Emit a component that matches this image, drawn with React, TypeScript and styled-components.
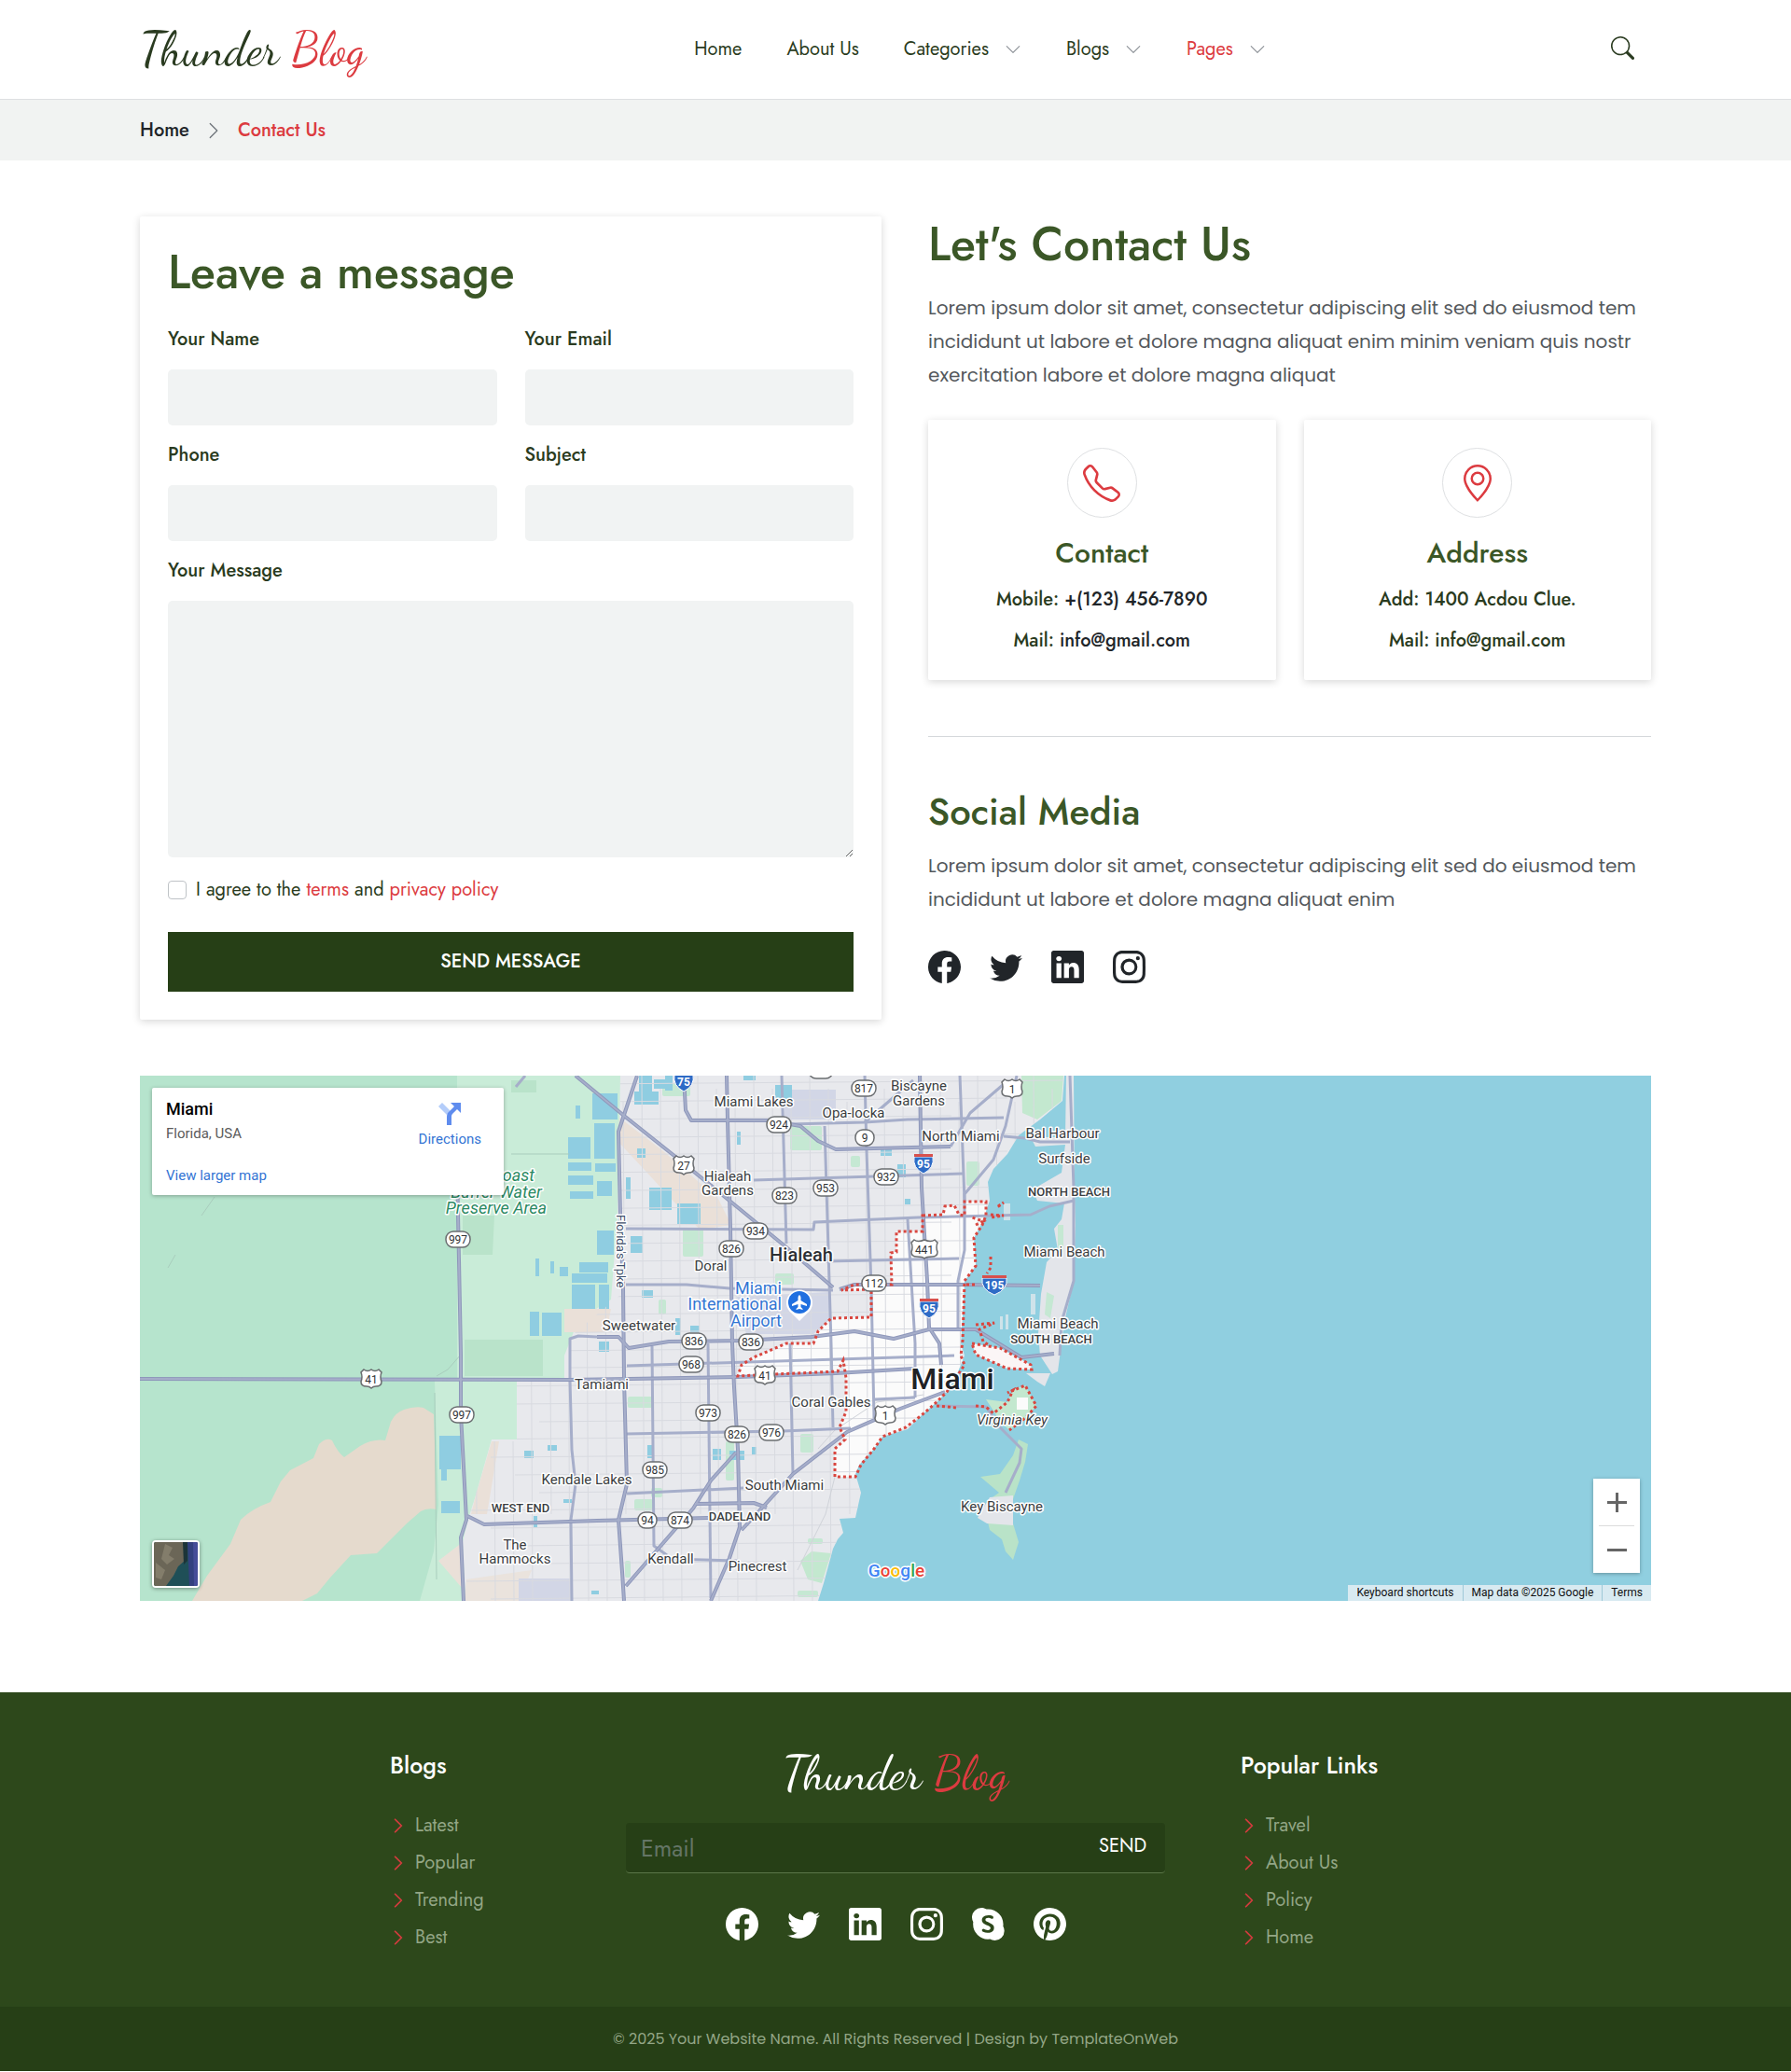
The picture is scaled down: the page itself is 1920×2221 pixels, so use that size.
import React from "react";
import styled, { createGlobalStyle } from "styled-components";
import {
  BsChevronDown,
  BsChevronRight,
  BsFacebook,
  BsGeoAlt,
  BsInstagram,
  BsLinkedin,
  BsPinterest,
  BsSearch,
  BsSkype,
  BsTelephone,
  BsTwitter,
} from "react-icons/bs";

const color = {
  leaf: "#3b5727",
  dark: "#2a3b20",
  ink: "#212529",
  red: "#dc3b40",
  field: "#f1f3f3",
  rule: "#dee0e2",
  body: "#54585c",
  footer: "#2d481b",
  footerDeep: "#263f16",
  footerText: "#93a686",
};

const heading = `Jost, Lato, "Open Sans", sans-serif`;
const bodyFont = `Poppins, Inter, "Open Sans", sans-serif`;
const script = `"Dancing Script", "Liberation Serif", serif`;

const GlobalStyle = createGlobalStyle`
  *, *::before, *::after { box-sizing: border-box; }
  body { margin: 0; background: #fff; color: ${color.dark}; font: 400 20px/30px ${heading}; }
  a { color: inherit; text-decoration: none; }
  h1, h2, h3, p, ul { margin: 0; padding: 0; }
  ul { list-style: none; }
  svg { display: block; }
  button { cursor: pointer; }
`;

const Container = styled.div`
  max-width: 1680px;
  margin: 0 auto;
  padding: 0 30px;
`;

/* ---------- header ---------- */

const Header = styled.header`
  border-bottom: 1px solid ${color.rule};
`;

const Bar = styled(Container)`
  display: flex;
  align-items: center;
  min-height: 106px;
`;

const Logo = styled.a<{ $light?: boolean }>`
  font: 400 50px/56px ${script};
  color: ${(p) => (p.$light ? "#fff" : color.dark)};
  white-space: nowrap;
  span {
    color: ${color.red};
  }
`;

const Nav = styled.nav`
  display: flex;
  gap: 48px;
  margin: 0 auto;
`;

const NavLink = styled.a<{ $active?: boolean }>`
  display: flex;
  align-items: center;
  gap: 17px;
  color: ${(p) => (p.$active ? color.red : color.dark)};
  svg {
    color: #8d9298;
  }
`;

const SearchButton = styled.button`
  padding: 0 18px 3px;
  border: 0;
  background: none;
  color: ${color.dark};
`;

const Crumbs = styled.nav`
  background: #f1f3f2;
`;

const CrumbList = styled(Container)`
  display: flex;
  align-items: center;
  gap: 16px;
  min-height: 65px;
  font-weight: 500;
  color: ${color.ink};
  svg {
    color: #6c7278;
  }
`;

const Current = styled.span`
  color: ${color.red};
`;

/* ---------- contact section ---------- */

const Columns = styled.section`
  display: grid;
  grid-template-columns: 795fr 775fr;
  gap: 50px;
  padding: 60px 0;
`;

const Card = styled.div`
  background: #fff;
  border-radius: 2px;
  box-shadow: 0 2px 8px rgba(0, 0, 0, 0.16);
`;

const FormCard = styled(Card).attrs({ as: "form" })`
  padding: 30px;
`;

const Title = styled.h1`
  font: 500 50px/60px ${heading};
  color: ${color.leaf};
`;

const SubTitle = styled.h2`
  font: 500 40px/40px ${heading};
  color: ${color.leaf};
`;

const Fields = styled.div`
  display: grid;
  grid-template-columns: 1fr 1fr;
  gap: 17px 30px;
  margin-top: 27px;
`;

const Field = styled.div<{ $wide?: boolean }>`
  display: flex;
  flex-direction: column;
  gap: 17px;
  grid-column: ${(p) => (p.$wide ? "1 / -1" : "auto")};
`;

const Label = styled.label`
  font-weight: 500;
`;

const Input = styled.input`
  width: 100%;
  height: 60px;
  padding: 0 15px;
  border: 0;
  border-radius: 5px;
  background: ${color.field};
  font: 400 20px/30px ${heading};
`;

const TextArea = styled.textarea`
  display: block;
  width: 100%;
  height: 275px;
  padding: 15px;
  border: 0;
  border-radius: 5px;
  background: ${color.field};
  font: 400 20px/30px ${heading};
  resize: vertical;
`;

const Agree = styled.div`
  display: flex;
  align-items: center;
  gap: 10px;
  margin: 20px 0 30px;
  a {
    color: ${color.red};
  }
`;

const Check = styled.input`
  appearance: none;
  width: 20px;
  height: 20px;
  margin: 0;
  border: 1px solid #bfc3c7;
  border-radius: 4px;
  background: #fff;
`;

const Submit = styled.button`
  width: 100%;
  height: 64px;
  border: 0;
  background: ${color.footerDeep};
  color: #fff;
  font: 500 20px/30px ${heading};
`;

const Copy = styled.p`
  margin-top: 20px;
  font: 400 20px/36px ${bodyFont};
  color: ${color.body};
`;

const InfoGrid = styled.div`
  display: grid;
  grid-template-columns: 1fr 1fr;
  gap: 30px;
  margin-top: 30px;
`;

const InfoCard = styled(Card)`
  display: flex;
  flex-direction: column;
  align-items: center;
  gap: 20px;
  padding: 30px;
  font-weight: 500;
  line-height: 24px;
  text-align: center;
`;

const Round = styled.span`
  display: grid;
  place-items: center;
  width: 75px;
  height: 75px;
  border: 1px solid ${color.rule};
  border-radius: 50%;
  color: ${color.red};
`;

const InfoTitle = styled.h3`
  font: 500 30px/36px ${heading};
  color: ${color.leaf};
`;

const InkLink = styled.a`
  color: ${color.ink};
`;

const Divider = styled.hr`
  height: 1px;
  margin: 60px 0;
  border: 0;
  background: #d5d8db;
`;

const Social = styled.div<{ $light?: boolean }>`
  display: flex;
  justify-content: ${(p) => (p.$light ? "center" : "flex-start")};
  gap: 31px;
  margin-top: 37px;
  color: ${(p) => (p.$light ? "#fff" : color.ink)};
`;

/* ---------- map ---------- */

const MapFrame = styled.section`
  position: relative;
  height: 563px;
  margin-bottom: 98px;
  overflow: hidden;
  font-family: Roboto, sans-serif;
  background: #90cfe0;
  > svg {
    width: 100%;
    height: 100%;
  }
`;

const PlaceCard = styled.div`
  position: absolute;
  top: 13px;
  left: 13px;
  display: flex;
  justify-content: space-between;
  width: 377px;
  height: 115px;
  padding: 10px 24px 8px 15px;
  border-radius: 2px;
  background: #fff;
  box-shadow: 0 1px 4px rgba(0, 0, 0, 0.3);
  font-size: 15px;
  line-height: 26px;
  color: #5b5b5b;
`;

const PlaceText = styled.div`
  display: flex;
  flex-direction: column;
`;

const PlaceName = styled.strong`
  font-size: 18px;
  font-weight: 500;
  color: #000;
`;

const BlueLink = styled.a`
  color: #3474d4;
`;

const LargerMap = styled(BlueLink)`
  margin-top: auto;
`;

const Directions = styled(BlueLink)`
  display: flex;
  flex-direction: column;
  align-items: center;
  gap: 2px;
  padding-top: 6px;
`;

const LayerButton = styled.button`
  position: absolute;
  left: 13px;
  bottom: 14px;
  width: 51px;
  height: 51px;
  padding: 0;
  border: 2px solid #fff;
  border-radius: 4px;
  overflow: hidden;
  box-shadow: 0 1px 4px rgba(0, 0, 0, 0.4);
`;

const ZoomBox = styled.div`
  position: absolute;
  right: 12px;
  bottom: 30px;
  width: 50px;
  padding: 0 6px;
  background: #fff;
  box-shadow: 0 1px 4px rgba(0, 0, 0, 0.3);
`;

const ZoomButton = styled.button`
  display: grid;
  place-items: center;
  width: 100%;
  height: 50px;
  padding: 0;
  border: 0;
  background: none;
  & + & {
    height: 51px;
    border-top: 1px solid #dcdcdc;
  }
`;

const Credits = styled.div`
  position: absolute;
  right: 0;
  bottom: 0;
  display: flex;
  height: 17px;
  background: #d8eaf1;
  font-size: 12px;
  line-height: 17px;
  color: #111;
  a {
    padding: 0 9px;
  }
  a + a {
    border-left: 1px solid #9fc9d8;
  }
`;

type Pts = string;

const thickRoads: Pts[] = [
  "0,325 461,326 524,325 641,323 746,319 830,314",
  "340,100 342,198 344,299 344,363 350,476 344,495 347,563",
  "533,0 513,60 515,149 518,228 519,325 522,438 513,476 517,532 519,563",
  "467,0 519,43 578,90 632,134 693,184 743,227",
  "629,0 630,47 633,164 635,287 637,334 641,400 643,484 632,517 612,563",
  "583,0 585,37 591,48 674,48 708,54 727,70 746,79 869,76",
  "836,0 838,120 844,220 846,270 857,287 859,310",
  "863,339 815,357 758,382 700,427 670,460 645,487",
  "490,280 513,280 524,292 567,285 643,284 720,280 766,274 808,282 846,272 896,272 945,302 980,298",
  "750,229 766,224 880,224 965,225",
  "639,404 612,434 593,464 521,547",
  "595,459 658,458 672,463",
  "351,472 369,481 490,477 609,474",
];

const thinRoads: Pts[] = [
  "697,52 777,50 823,47 926,45",
  "940,0 928,54 915,90 884,127 884,187 877,220 877,270",
  "658,112 882,105",
  "521,164 722,165 723,157 834,152 955,149 975,140 1001,134",
  "521,224 586,224 632,228 743,230",
  "735,199 878,196",
  "688,0 693,180",
  "734,54 741,287 743,377",
  "697,287 700,427",
  "777,0 779,80 784,227 787,367",
  "879,0 884,134",
  "823,154 831,287 831,345",
  "549,290 551,504 565,514",
  "609,287 612,560",
  "522,311 873,300",
  "521,384 689,381 762,378",
  "522,448 647,442",
  "788,347 831,345",
  "461,326 461,282 470,279 490,280",
  "461,326 463,401 467,438 462,476 463,563",
  "854,354 907,355 922,377 945,400 943,415 928,447",
  "997,0 1001,120 1001,220 988,264 986,300",
  "926,65 949,67 965,71 997,71",
  "777,50 829,5",
  "869,76 890,40 925,10",
  "565,518 640,520",
  "413,0 403,12",
];

const ponds: number[][] = [
  [485, 19, 27, 28], [487, 51, 22, 38], [459, 66, 24, 23], [459, 93, 25, 9], [488, 94, 22, 9],
  [459, 107, 27, 10], [490, 113, 16, 16], [461, 124, 25, 8], [535, 0, 14, 22], [521, 109, 5, 23],
  [490, 166, 18, 26], [471, 200, 31, 11], [463, 212, 38, 10], [463, 224, 25, 26], [492, 224, 11, 26],
  [418, 253, 10, 26], [431, 254, 21, 25], [424, 196, 4, 19], [440, 199, 4, 13], [450, 205, 9, 10],
  [321, 386, 23, 36], [323, 422, 6, 12], [323, 456, 20, 13], [467, 32, 5, 14], [492, 285, 11, 11],
  [530, 17, 26, 14], [546, 120, 24, 24], [576, 137, 25, 22], [526, 172, 13, 18], [647, 0, 13, 5],
  [681, 10, 18, 16], [794, 79, 12, 7], [812, 95, 9, 14], [632, 402, 16, 10], [614, 400, 9, 12],
  [533, 78, 9, 10], [563, 0, 8, 16], [640, 60, 4, 14], [574, 260, 6, 18], [590, 268, 10, 7],
  [538, 230, 12, 8], [437, 396, 10, 6], [412, 402, 10, 8], [454, 454, 9, 4], [422, 472, 4, 12],
  [544, 396, 6, 14], [484, 552, 8, 4], [656, 398, 5, 8], [820, 132, 6, 6], [551, 4, 12, 10],
];

const parks: number[][] = [
  [697, 54, 34, 26], [582, 164, 22, 30], [681, 212, 20, 12], [523, 344, 27, 12], [708, 384, 14, 20],
  [628, 392, 9, 42], [530, 454, 20, 12], [765, 320, 6, 15], [762, 86, 10, 12], [556, 240, 8, 16],
  [818, 286, 7, 8], [450, 430, 24, 9], [548, 442, 12, 10], [716, 496, 16, 6], [705, 552, 22, 7],
  [700, 296, 8, 8], [811, 202, 10, 12], [886, 92, 14, 26], [560, 8, 30, 14], [520, 520, 6, 18],
];

const land =
  "0,0 991,0 989,27 965,47 942,64 930,84 915,100 909,114 911,134 903,157 894,174 896,204 884,220 882,254 880,287 884,300 877,317 865,339 854,350 838,364 823,379 796,387 787,400 771,417 767,427 773,447 767,474 750,475 754,490 748,497 743,507 733,544 727,563 0,563";

const cityLimit =
  "839,150 861,149 863,140 873,139 878,149 884,150 884,135 907,135 907,150 903,160 894,174 896,204 884,220 882,284 880,300 884,310 865,339 854,350 838,364 821,377 796,387 787,400 773,417 767,430 745,430 745,400 756,390 750,377 757,360 757,324 754,305 748,317 681,320 641,322 645,310 658,302 693,287 722,287 727,274 731,270 741,260 784,259 784,229 752,230 766,224 806,224 805,190 811,189 811,167 839,167";

interface Place {
  x: number;
  y: number;
  text: string;
  size?: number;
  weight?: number;
  fill?: string;
  italic?: boolean;
  anchor?: "middle" | "end";
}

const places: Place[] = [
  { x: 658, y: 33, text: "Miami Lakes" },
  { x: 835, y: 16, text: "Biscayne" },
  { x: 835, y: 32, text: "Gardens" },
  { x: 765, y: 45, text: "Opa-locka" },
  { x: 880, y: 70, text: "North Miami" },
  { x: 989, y: 67, text: "Bal Harbour" },
  { x: 991, y: 94, text: "Surfside" },
  { x: 996, y: 129, text: "NORTH BEACH", size: 13, weight: 500 },
  { x: 630, y: 113, text: "Hialeah" },
  { x: 630, y: 128, text: "Gardens" },
  { x: 709, y: 199, text: "Hialeah", size: 20, weight: 500, fill: "#2d3034" },
  { x: 612, y: 209, text: "Doral" },
  { x: 991, y: 194, text: "Miami Beach" },
  { x: 984, y: 271, text: "Miami Beach" },
  { x: 977, y: 287, text: "SOUTH BEACH", size: 13, weight: 500 },
  { x: 535, y: 273, text: "Sweetwater" },
  { x: 688, y: 234, text: "Miami", size: 18, fill: "#3376d3", anchor: "end" },
  { x: 688, y: 251, text: "International", size: 18, fill: "#3376d3", anchor: "end" },
  { x: 688, y: 269, text: "Airport", size: 18, fill: "#3376d3", anchor: "end" },
  { x: 871, y: 336, text: "Miami", size: 32, weight: 500, fill: "#202124" },
  { x: 741, y: 355, text: "Coral Gables" },
  { x: 935, y: 374, text: "Virginia Key", italic: true },
  { x: 495, y: 336, text: "Tamiami" },
  { x: 479, y: 438, text: "Kendale Lakes" },
  { x: 408, y: 468, text: "WEST END", size: 13, weight: 500 },
  { x: 402, y: 508, text: "The" },
  { x: 402, y: 523, text: "Hammocks" },
  { x: 691, y: 444, text: "South Miami" },
  { x: 643, y: 477, text: "DADELAND", size: 13, weight: 500 },
  { x: 569, y: 523, text: "Kendall" },
  { x: 662, y: 531, text: "Pinecrest" },
  { x: 924, y: 467, text: "Key Biscayne" },
  { x: 423, y: 113, text: "East Coast", size: 18, italic: true, fill: "#2b8a63", anchor: "end" },
  { x: 382, y: 131, text: "Buffer Water", size: 18, italic: true, fill: "#2b8a63" },
  { x: 382, y: 148, text: "Preserve Area", size: 18, italic: true, fill: "#2b8a63" },
];

const stateRoutes: [number, number, string][] = [
  [776, 13, "817"], [685, 52, "924"], [777, 66, "9"], [800, 108, "932"], [735, 120, "953"],
  [691, 128, "823"], [660, 166, "934"], [634, 185, "826"], [787, 222, "112"], [594, 284, "836"],
  [655, 285, "836"], [591, 309, "968"], [609, 361, "973"], [640, 384, "826"], [677, 382, "976"],
  [552, 422, "985"], [544, 476, "94"], [579, 476, "874"], [341, 175, "997"], [345, 363, "997"],
];

const usRoutes: [number, number, string][] = [
  [248, 325, "41"], [583, 96, "27"], [935, 14, "1"], [841, 186, "441"], [670, 321, "41"], [799, 364, "1"],
];

const interstates: [number, number, string][] = [
  [583, 6, "75"], [840, 94, "95"], [846, 249, "95"], [916, 224, "195"],
];

function StateShield({ x, y, text }: { x: number; y: number; text: string }) {
  const w = text.length > 2 ? 26 : 20;
  return (
    <g>
      <rect x={x - w / 2} y={y - 8} width={w} height={17} rx={8} fill="#fff" stroke="#6a6d70" strokeWidth={1.5} />
      <text x={x} y={y + 5} fontSize={12} textAnchor="middle" fill="#303336">
        {text}
      </text>
    </g>
  );
}

function UsShield({ x, y, text }: { x: number; y: number; text: string }) {
  const s = text.length > 2 ? 3 : 0;
  return (
    <g>
      <path
        transform={`translate(${x} ${y})`}
        d={`M${-8 - s} -10 Q${-4 - s} -7 0 -10 Q${4 + s} -7 ${8 + s} -10 L${11 + s} -7 Q${9 + s} -2 ${11 + s} 3 Q${11 + s} 8 ${5 + s} 8 Q2 8 0 10 Q-2 8 ${-5 - s} 8 Q${-11 - s} 8 ${-11 - s} 3 Q${-9 - s} -2 ${-11 - s} -7 Z`}
        fill="#fff"
        stroke="#6a6d70"
        strokeWidth={1.5}
      />
      <text x={x} y={y + 5} fontSize={12} textAnchor="middle" fill="#303336">
        {text}
      </text>
    </g>
  );
}

function InterstateShield({ x, y, text }: { x: number; y: number; text: string }) {
  const h = text.length > 2 ? 13 : 10;
  return (
    <g>
      <path
        transform={`translate(${x} ${y})`}
        d={`M${-h} -7 H${h} Q${h + 2} 5 0 11 Q${-h - 2} 5 ${-h} -7 Z`}
        fill="#2e6bc6"
        stroke="#fff"
        strokeWidth={1}
      />
      <path transform={`translate(${x} ${y})`} d={`M${-h} -10 H${h} V-7 H${-h} Z`} fill="#d8504d" />
      <text x={x} y={y + 5} fontSize={12} fontWeight={700} textAnchor="middle" fill="#fff">
        {text}
      </text>
    </g>
  );
}

const range = (from: number, to: number, step: number) =>
  Array.from({ length: Math.ceil((to - from) / step) }, (_, i) => from + i * step);

function MiamiMap() {
  return (
    <svg viewBox="0 0 1620 563" preserveAspectRatio="xMidYMid slice" role="img" aria-label="Map of Miami">
      <defs>
        <clipPath id="land">
          <polygon points={land} />
        </clipPath>
        <clipPath id="urban">
          <path d="M515 0 H1010 V563 H350 V480 L377 392 H404 V327 L461 326 V280 L515 235 Z" />
        </clipPath>
      </defs>
      <rect width="1620" height="563" fill="#90cfe0" />
      <polygon points={land} fill="#e8e9ed" />
      <g clipPath="url(#land)">
        <path d="M0 0 H340 L345 563 H0 Z" fill="#b6e4cd" />
        <path
          d="M340 0 H515 L512 150 L505 240 L470 262 L455 300 V327 H404 V390 H377 L360 450 L352 475 L346 500 L349 563 H300 L315 510 L320 460 L316 327 H340 Z"
          fill="#c9ecd8"
        />
        <path d="M348 283 H432 V322 H348 Z M346 150 L380 150 L378 192 H346 Z" fill="#b9e3ca" />
        <path d="M398 5 H425 V18 H398 Z" fill="#b9e3ca" />
        <path
          d="M56 563 L72 536 L97 502 L108 476 Q120 464 140 457 L151 435 L161 423 L186 410 L192 395 Q200 387 206 391 Q212 404 219 409 L236 397 Q250 389 263 391 L269 371 Q274 361 283 358 Q295 354 304 356 L315 363 L318 465 Q308 463 301 467 L286 480 L254 512 L226 514 L204 538 L190 555 L174 563 Z"
          fill="#e5dacd"
        />
        <path
          d="M455 250 H505 L500 275 H455 Z M514 45 L560 80 L620 132 L634 160 L600 165 L540 100 L512 70 Z M355 470 L360 450 L377 392 L385 392 L372 470 Z M320 520 L346 500 V550 Z"
          fill="#eae0d8"
        />
        <path d="M350 540 L420 530 L406 563 H348 Z" fill="#eae3dd" />
        <path d="M691 15 H746 V47 H691 Z M640 237 L739 232 V262 L722 277 H650 Z M406 539 H463 V563 H406 Z" fill="#d2d6e6" />
        <path d="M945 0 H990 L988 27 L962 47 L946 40 Z M708 520 L720 510 L741 512 L731 544 L716 540 Z" fill="#c3e8cf" />
        {parks.map(([x, y, w, h]) => (
          <rect key={`p${x}-${y}`} x={x} y={y} width={w} height={h} rx={2} fill="#c5e8d3" />
        ))}
        {ponds.map(([x, y, w, h]) => (
          <rect key={`w${x}-${y}`} x={x} y={y} width={w} height={h} fill="#8fcde1" />
        ))}
        <polygon points={cityLimit} fill="#fbfbfb" />
        <g clipPath="url(#urban)" stroke="#d8dae0" strokeWidth={1} fill="none">
          {range(358, 1000, 20).map((x, i) => (
            <path key={x} d={`M${x} ${(i % 3) * 14} L${x + 3} ${i % 4 === 0 ? 470 : 563}`} />
          ))}
          {range(10, 563, 19).map((y, i) => (
            <path key={y} d={`M${350 + (i % 4) * 26} ${y} L${990 - (i % 3) * 60} ${y - 5}`} />
          ))}
        </g>
        <path
          d="M316 340 L318 540 M344 299 L330 315 L318 322 M398 84 H460 M80 130 L66 150 M38 192 L30 206"
          stroke="#a9cdbd"
          fill="none"
        />
        <path d="M727 400 L745 380 L790 350 L840 342 M745 430 L735 470 L705 530" stroke="#cfd2d8" fill="none" />
      </g>

      <path
        d="M993 0 H1001 L1002 127 L1003 160 L1001 220 L991 264 L984 317 L978 320 L965 300 L963 277 L966 234 L972 200 L984 187 L980 164 L988 154 L991 137 L962 134 L957 122 L988 104 L992 74 L960 76 L955 66 H992 Z"
        fill="#e3e5ea"
      />
      <path d="M950 319 L976 319 L970 333 L962 328 Z" fill="#e3e5ea" />
      <path d="M984 160 L990 160 L990 190 L984 186 Z M972 232 L980 236 L976 260 L970 256 Z" fill="#c5e8d3" />
      <path d="M926 137 h7 v18 h-7 z M955 234 h5 v22 h-5 z M922 258 h3 v14 h-3 z M928 256 h3 v16 h-3 z" fill="#cfe3ea" />
      <path d="M907 347 L930 350 L936 337 L949 332 L961 354 L949 367 L932 380 L922 370 Z" fill="#c3e8cf" />
      <path
        d="M942 390 L952 395 L949 414 L943 434 L936 454 V480 L942 500 L936 519 L928 510 L924 497 L911 487 L907 470 L911 454 L921 447 L901 430 L922 427 L936 407 Z"
        fill="#b9e3c8"
      />
      <path d="M911 452 L936 450 V482 L908 480 L898 474 Z" fill="#e3e5ea" />
      <path d="M940 345 H952 V358 H940 Z" fill="#fbfbfb" />

      <g fill="none" strokeLinejoin="round">
        {thinRoads.map((p) => (
          <polyline key={p} points={p} stroke="#a6aeca" strokeWidth={3} />
        ))}
        {thickRoads.map((p) => (
          <polyline key={p} points={p} stroke="#8e97ba" strokeWidth={4} />
        ))}
        {thickRoads.map((p) => (
          <polyline key={p} points={p} stroke="#a6aeca" strokeWidth={2} />
        ))}
      </g>

      <g fill="none" stroke="#d9463f" strokeWidth={3} strokeDasharray="3 3">
        <polygon points={cityLimit} />
        <polygon points="892,287 922,292 955,310 956,315 930,314 896,299" fill="#fbf6f6" />
        <polyline points="854,354 876,356" />
        <polyline points="896,354 907,355 915,362 930,350 936,337 930,340 949,332 961,354 949,367 932,380" />
        <polyline points="912,149 926,150 912,152" />
        <polyline points="896,267 916,265 900,272 904,285 912,290" />
        <polyline points="920,140 926,136 918,142" />
        <polyline points="912,194 912,206 908,212" />
        <polyline points="886,224 896,224" />
        <polyline points="896,160 904,156 892,152" />
      </g>

      <g paintOrder="stroke" stroke="#fff" strokeWidth={3} strokeLinejoin="round">
        {places.map((p) => (
          <text
            key={`${p.text}-${p.x}-${p.y}`}
            x={p.x}
            y={p.y}
            fontSize={p.size ?? 15}
            fontWeight={p.weight ?? 400}
            fontStyle={p.italic ? "italic" : "normal"}
            fill={p.fill ?? "#3a3d41"}
            textAnchor={p.anchor ?? "middle"}
          >
            {p.text}
          </text>
        ))}
        <text transform="translate(511 149) rotate(90)" fontSize={13} fill="#3f4f6b">
          Florida's Tpke
        </text>
        <text x={811} y={537} fontSize={19} fontWeight={500} textAnchor="middle">
          <tspan fill="#4285f4">G</tspan>
          <tspan fill="#ea4335">o</tspan>
          <tspan fill="#fbbc05">o</tspan>
          <tspan fill="#4285f4">g</tspan>
          <tspan fill="#34a853">l</tspan>
          <tspan fill="#ea4335">e</tspan>
        </text>
      </g>

      <rect x={717} y={-14} width={26} height={17} rx={8} fill="#fff" stroke="#6a6d70" strokeWidth={1.5} />
      {stateRoutes.map(([x, y, t]) => (
        <StateShield key={`${x}-${y}`} x={x} y={y} text={t} />
      ))}
      {usRoutes.map(([x, y, t]) => (
        <UsShield key={`${x}-${y}`} x={x} y={y} text={t} />
      ))}
      {interstates.map(([x, y, t]) => (
        <InterstateShield key={`${x}-${y}`} x={x} y={y} text={t} />
      ))}

      <g transform="translate(707 243)">
        <path d="M0 20 L-8 12 A14 14 0 1 1 8 12 Z" fill="#fff" />
        <circle r={12} fill="#1f6fe0" />
        <path
          d="M0 -8 Q1.5 -7 1.5 -5 V-2 L8 2 V4 L1.5 2 V5 L3.500 7 V8 L0 7 L-3.500 8 V7 L-1.500 5 V2 L-8 4 V2 L-1.500 -2 V-5 Q-1.500 -7 0 -8 Z"
          fill="#fff"
        />
      </g>
    </svg>
  );
}

function DirectionsIcon() {
  return (
    <svg width="24" height="24" viewBox="0 0 24 24" aria-hidden="true">
      <path d="M0 4 L4 0 L13 9 L9 13 Z" fill="#b4cdfa" />
      <path d="M9 24 V15 Q9 11 12 9 L17 4 L13 0 H24 V11 L20 7 L15 12 Q14 13 14 15 V24 Z" fill="#5f8cee" />
    </svg>
  );
}

function SatelliteIcon() {
  return (
    <svg width="47" height="47" viewBox="0 0 47 47" aria-hidden="true">
      <rect width="47" height="47" fill="#1f4f57" />
      <path d="M0 0 H34 L33 20 L26 26 L21 36 L13 47 H0 Z" fill="#6b6657" />
      <path d="M12 2 L20 6 L16 14 L22 18 L14 24 L8 18 Z M2 22 L12 30 L8 40 L2 38 Z" fill="#837d6b" />
      <path d="M31 0 H36 V20 L32 24 Z" fill="#1c3438" />
      <path d="M36 0 H47 V47 H38 Z" fill="#33407f" />
      <path d="M42 0 H47 V47 H43 Z" fill="#454c98" />
    </svg>
  );
}

/* ---------- footer ---------- */

const Footer = styled.footer`
  background: ${color.footer};
  color: #fff;
`;

const FooterGrid = styled(Container)`
  display: grid;
  grid-template-columns: 172px minmax(0, 578px) 172px;
  justify-content: center;
  gap: 81px;
  padding-top: 59px;
  padding-bottom: 59px;
`;

const FooterTitle = styled.h3`
  margin: 1px 0 32px;
  font: 500 25px/36px ${heading};
`;

const FooterList = styled.ul`
  display: flex;
  flex-direction: column;
  gap: 10px;
  color: ${color.footerText};
  a {
    display: flex;
    align-items: center;
    gap: 9px;
  }
  svg {
    color: ${color.red};
    stroke-width: 0.5;
  }
`;

const Brand = styled.div`
  text-align: center;
`;

const Subscribe = styled.form`
  display: flex;
  align-items: center;
  height: 54px;
  margin-top: 25px;
  border-bottom: 1px solid #5a7548;
  border-radius: 4px;
  background: ${color.footerDeep};
`;

const EmailInput = styled.input`
  flex: 1;
  min-width: 0;
  padding: 0 16px;
  border: 0;
  background: none;
  color: #fff;
  font: 400 25px/36px ${heading};
  &::placeholder {
    color: #647566;
    opacity: 1;
  }
`;

const SendButton = styled.button`
  padding: 0 20px 4px;
  border: 0;
  background: none;
  color: #fff;
  font: 400 20px/30px ${heading};
`;

const Legal = styled.div`
  background: ${color.footerDeep};
  color: ${color.footerText};
  font: 400 16px/69px ${bodyFont};
  text-align: center;
`;

const navItems = [
  { label: "Home" },
  { label: "About Us" },
  { label: "Categories", menu: true },
  { label: "Blogs", menu: true },
  { label: "Pages", menu: true, active: true },
];

const textFields = [
  { id: "name", label: "Your Name", type: "text" },
  { id: "email", label: "Your Email", type: "email" },
  { id: "phone", label: "Phone", type: "tel" },
  { id: "subject", label: "Subject", type: "text" },
];

const mainSocial = [
  { label: "Facebook", Icon: BsFacebook },
  { label: "Twitter", Icon: BsTwitter },
  { label: "LinkedIn", Icon: BsLinkedin },
  { label: "Instagram", Icon: BsInstagram },
];

const footerSocial = [
  ...mainSocial,
  { label: "Skype", Icon: BsSkype },
  { label: "Pinterest", Icon: BsPinterest },
];

function SocialLinks({ items, light }: { items: typeof mainSocial; light?: boolean }) {
  return (
    <Social $light={light}>
      {items.map(({ label, Icon }) => (
        <a key={label} href="#" aria-label={label}>
          <Icon size={35} />
        </a>
      ))}
    </Social>
  );
}

function FooterLinks({ title, links }: { title: string; links: string[] }) {
  return (
    <div>
      <FooterTitle>{title}</FooterTitle>
      <FooterList>
        {links.map((link) => (
          <li key={link}>
            <a href="#">
              <BsChevronRight size={18} />
              {link}
            </a>
          </li>
        ))}
      </FooterList>
    </div>
  );
}

export default function App() {
  return (
    <>
      <GlobalStyle />
      <Header>
        <Bar>
          <Logo href="#">
            Thunder <span>Blog</span>
          </Logo>
          <Nav aria-label="Main">
            {navItems.map((item) => (
              <NavLink key={item.label} href="#" $active={item.active}>
                {item.label}
                {item.menu && <BsChevronDown size={18} />}
              </NavLink>
            ))}
          </Nav>
          <SearchButton type="button" aria-label="Search">
            <BsSearch size={25} />
          </SearchButton>
        </Bar>
      </Header>

      <Crumbs aria-label="Breadcrumb">
        <CrumbList>
          <a href="#">Home</a>
          <BsChevronRight size={20} />
          <Current>Contact Us</Current>
        </CrumbList>
      </Crumbs>

      <Container as="main">
        <Columns>
          <FormCard>
            <Title>Leave a message</Title>
            <Fields>
              {textFields.map((f) => (
                <Field key={f.id}>
                  <Label htmlFor={f.id}>{f.label}</Label>
                  <Input id={f.id} type={f.type} />
                </Field>
              ))}
              <Field $wide>
                <Label htmlFor="message">Your Message</Label>
                <TextArea id="message" />
              </Field>
            </Fields>
            <Agree>
              <Check id="agree" type="checkbox" />
              <label htmlFor="agree">
                I agree to the <a href="#">terms</a> and <a href="#">privacy policy</a>
              </label>
            </Agree>
            <Submit type="button">SEND MESSAGE</Submit>
          </FormCard>

          <div>
            <Title as="h2">Let's Contact Us</Title>
            <Copy>
              Lorem ipsum dolor sit amet, consectetur adipiscing elit sed do eiusmod tem
              <br />
              incididunt ut labore et dolore magna aliquat enim minim veniam quis nostr
              <br />
              exercitation labore et dolore magna aliquat
            </Copy>
            <InfoGrid>
              <InfoCard>
                <Round>
                  <BsTelephone size={40} />
                </Round>
                <InfoTitle>Contact</InfoTitle>
                <p>
                  Mobile: <InkLink href="#">+(123) 456-7890</InkLink>
                </p>
                <p>
                  Mail: <InkLink href="#">info@gmail.com</InkLink>
                </p>
              </InfoCard>
              <InfoCard>
                <Round>
                  <BsGeoAlt size={40} />
                </Round>
                <InfoTitle>Address</InfoTitle>
                <p>Add: 1400 Acdou Clue.</p>
                <p>Mail: info@gmail.com</p>
              </InfoCard>
            </InfoGrid>
            <Divider />
            <SubTitle>Social Media</SubTitle>
            <Copy>
              Lorem ipsum dolor sit amet, consectetur adipiscing elit sed do eiusmod tem
              <br />
              incididunt ut labore et dolore magna aliquat enim
            </Copy>
            <SocialLinks items={mainSocial} />
          </div>
        </Columns>

        <MapFrame>
          <MiamiMap />
          <PlaceCard>
            <PlaceText>
              <PlaceName>Miami</PlaceName>
              <span>Florida, USA</span>
              <LargerMap href="#">View larger map</LargerMap>
            </PlaceText>
            <div>
              <Directions href="#">
                <DirectionsIcon />
                Directions
              </Directions>
            </div>
          </PlaceCard>
          <LayerButton type="button" aria-label="Satellite view">
            <SatelliteIcon />
          </LayerButton>
          <ZoomBox>
            <ZoomButton type="button" aria-label="Zoom in">
              <svg width="21" height="21" viewBox="0 0 21 21">
                <path d="M9 0 H12 V9 H21 V12 H12 V21 H9 V12 H0 V9 H9 Z" fill="#666" />
              </svg>
            </ZoomButton>
            <ZoomButton type="button" aria-label="Zoom out">
              <svg width="21" height="21" viewBox="0 0 21 21">
                <path d="M0 9 H21 V12 H0 Z" fill="#666" />
              </svg>
            </ZoomButton>
          </ZoomBox>
          <Credits>
            <a href="#">Keyboard shortcuts</a>
            <a href="#">Map data ©2025 Google</a>
            <a href="#">Terms</a>
          </Credits>
        </MapFrame>
      </Container>

      <Footer>
        <FooterGrid>
          <FooterLinks title="Blogs" links={["Latest", "Popular", "Trending", "Best"]} />
          <Brand>
            <Logo href="#" $light>
              Thunder <span>Blog</span>
            </Logo>
            <Subscribe>
              <EmailInput type="email" placeholder="Email" aria-label="Email" />
              <SendButton type="button">SEND</SendButton>
            </Subscribe>
            <SocialLinks items={footerSocial} light />
          </Brand>
          <FooterLinks title="Popular Links" links={["Travel", "About Us", "Policy", "Home"]} />
        </FooterGrid>
        <Legal>
          © 2025 Your Website Name. All Rights Reserved | Design by <a href="#">TemplateOnWeb</a>
        </Legal>
      </Footer>
    </>
  );
}
